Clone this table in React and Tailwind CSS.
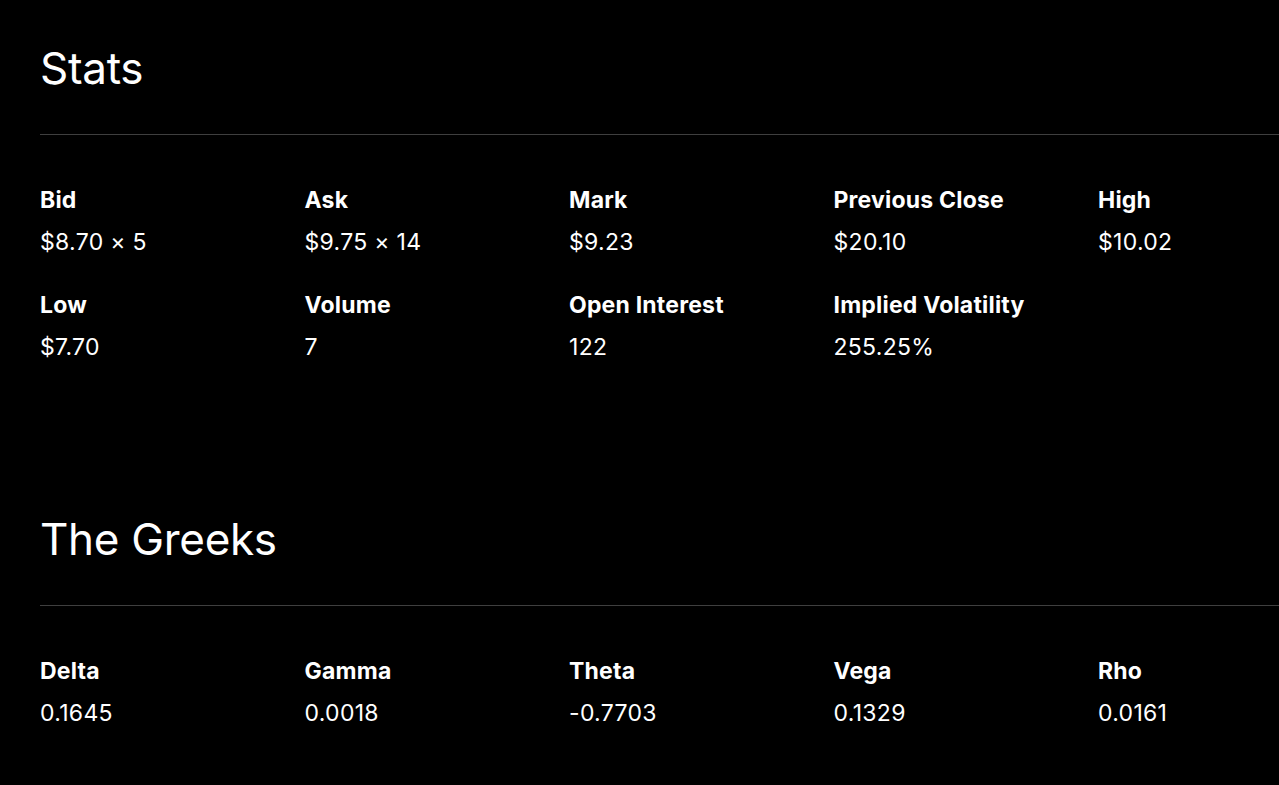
const stats = [
  { label: "Bid", value: "$8.70 × 5" },
  { label: "Ask", value: "$9.75 × 14" },
  { label: "Mark", value: "$9.23" },
  { label: "Previous Close", value: "$20.10" },
  { label: "High", value: "$10.02" },
  { label: "Low", value: "$7.70" },
  { label: "Volume", value: "7" },
  { label: "Open Interest", value: "122" },
  { label: "Implied Volatility", value: "255.25%" },
];

const greeks = [
  { label: "Delta", value: "0.1645" },
  { label: "Gamma", value: "0.0018" },
  { label: "Theta", value: "-0.7703" },
  { label: "Vega", value: "0.1329" },
  { label: "Rho", value: "0.0161" },
];

function Section({ title, items, className }) {
  return (
    <section className={className}>
      <h2 className="text-[44px] leading-[52px] tracking-[-0.3px]">{title}</h2>
      <div className="mt-10 h-px bg-[#3f3f3f]" />
      <div className="mt-[51px] grid grid-cols-[repeat(5,264.5px)] gap-y-[35px]">
        {items.map((item) => (
          <div key={item.label} className="flex flex-col gap-[14px]">
            <span className="text-[23px] leading-[28px] font-bold tracking-[0.2px]">{item.label}</span>
            <span className="text-[23px] leading-[28px] tracking-[0.3px]">{item.value}</span>
          </div>
        ))}
      </div>
    </section>
  );
}

export default function App() {
  return (
    <div
      className="min-h-[785px] w-full overflow-hidden bg-black pl-10 pt-[42px] text-white"
      style={{ fontFamily: "Inter, 'Noto Sans', sans-serif" }}
    >
      <Section title="Stats" items={stats} />
      <Section title="The Greeks" items={greeks} className="mt-[152px]" />
    </div>
  );
}
